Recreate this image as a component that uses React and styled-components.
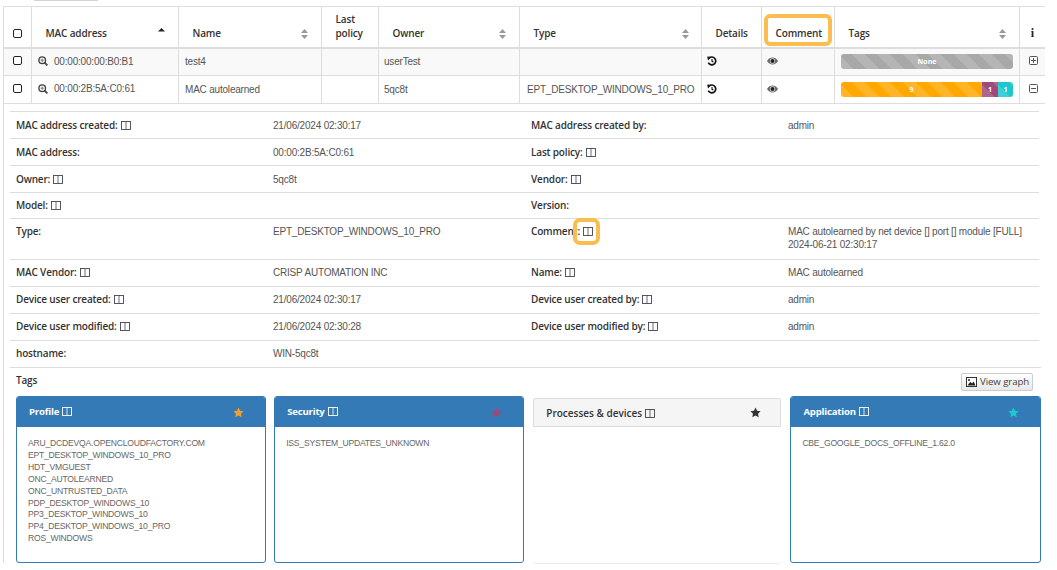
import React from "react";
import styled, { createGlobalStyle } from "styled-components";

const Global = createGlobalStyle`
  html, body { margin: 0; padding: 0; background: #fff; }
  body { font-family: "Liberation Sans", Arial, sans-serif; font-size: 10px; color: #555; overflow: hidden; height: 570px; }
`;

const Page = styled.div`
  width: 1042px;
  height: 570px;
  margin-left: 3px;
  overflow: hidden;
`;

const TopStub = styled.div`
  width: 64px;
  height: 1px;
  margin: 0 0 5px 31px;
  background: #d4d4d4;
`;

const Table = styled.table`
  width: 1042px;
  table-layout: fixed;
  border-collapse: collapse;
  border-left: 1px solid #ddd;
  border-right: 2px solid #ddd;
`;

const Head = styled.th`
  position: relative;
  height: 41px;
  padding: 0 0 7px 13.5px;
  box-sizing: border-box;
  border: 1px solid #ddd;
  border-bottom: 2px solid #ddd;
  vertical-align: bottom;
  text-align: left;
  font: 600 10px/14px "Open Sans", sans-serif;
  letter-spacing: -0.15px;
  color: #333;
  ${(p) => p.$tight && "padding-left: 9px;"}
  ${(p) => p.$center && "padding-left: 0; text-align: center;"}
`;

const Cell = styled.td`
  height: 28px;
  padding: 0 ${(p) => p.$pad ?? 6}px;
  box-sizing: border-box;
  border: 1px solid #ddd;
  background: ${(p) => (p.$alt ? "#f9f9f9" : "#fff")};
  white-space: nowrap;
  overflow: hidden;
  color: #555;
  font-size: 10px;
  letter-spacing: -0.2px;
  vertical-align: middle;
`;

const DetailHolder = styled.td`
  padding: 7px 5px 0 6px;
  border: 0;
  vertical-align: top;
`;

const Check = styled.span`
  display: block;
  width: 7px;
  height: 7px;
  margin-bottom: ${(p) => (p.$head ? "2px" : "3px")};
  border: 1.5px solid #222;
  border-radius: 2px;
  background: #fff;
`;

const SortIcon = styled.svg`
  position: absolute;
  right: ${(p) => p.$right}px;
  top: ${(p) => p.$top ?? 22}px;
  width: 7px;
  height: 10px;
`;

const MacCell = styled.span`
  display: inline-flex;
  align-items: center;
  gap: 6px;
`;

const Highlight = styled.span`
  position: absolute;
  box-sizing: border-box;
  border: 4px solid #fbbd4f;
  pointer-events: none;
`;

const HeadHighlight = styled(Highlight)`
  left: 2px;
  right: 2px;
  top: 7px;
  bottom: 1px;
  border-radius: 6px;
`;

const FieldHighlight = styled(Highlight)`
  left: 48px;
  top: -1px;
  width: 27px;
  height: 27px;
  border-radius: 7px;
`;

const Bar = styled.div`
  display: flex;
  height: 15px;
  border-radius: 3px;
  overflow: hidden;
`;

const Segment = styled.div`
  flex: ${(p) => p.$size} 0 0;
  display: flex;
  align-items: center;
  justify-content: center;
  font: 700 7px/1 "Open Sans", sans-serif;
  letter-spacing: 0;
  color: #fff;
  background-color: ${(p) => p.$color};
  background-image: repeating-linear-gradient(
    45deg,
    rgba(255, 255, 255, 0.15) 0 9px,
    transparent 9px 18px
  );
`;

const Details = styled.div`
  width: 1029px;
`;

const DetailRow = styled.div`
  display: grid;
  grid-template-columns: 257px 258px 257px 257px;
  border-top: 1px solid #ddd;
  min-height: ${(p) => p.$h}px;
`;

const DetailCell = styled.div`
  position: relative;
  padding: ${(p) => p.$top}px 6px 0;
  font-size: 10px;
  letter-spacing: -0.2px;
  line-height: 13px;
  color: #555;
`;

const Label = styled(DetailCell)`
  font: 600 10px/13px "Open Sans", sans-serif;
  letter-spacing: -0.17px;
  color: #333;
`;

const TagsBlock = styled.div`
  border-top: 1px solid #ddd;
  padding: 6px 0 0 6px;
  width: 1024.5px;
`;

const TagsTop = styled.div`
  display: flex;
  justify-content: space-between;
  align-items: flex-start;
  font: 600 10px/13px "Open Sans", sans-serif;
  letter-spacing: -0.17px;
  color: #333;
  padding-right: 7.5px;
  height: 22px;
`;

const GraphButton = styled.button`
  display: flex;
  align-items: center;
  gap: 3px;
  height: 18px;
  width: 72px;
  margin-top: -1px;
  padding: 0 3px 0 4px;
  white-space: nowrap;
  border: 1px solid #ccc;
  border-radius: 2px;
  background: linear-gradient(#fff, #e8e8e8);
  font: 400 9.7px/1 "Open Sans", sans-serif;
  letter-spacing: -0.1px;
  color: #444;
`;

const Cards = styled.div`
  display: grid;
  grid-template-columns: repeat(4, 1fr);
  gap: 8px;
`;

const Card = styled.div`
  box-sizing: border-box;
  height: ${(p) => (p.$muted ? "165px" : "167px")};
  margin: ${(p) => (p.$muted ? "2px 1px 0 1px" : "0")};
  border: ${(p) => (p.$muted ? "0" : "1px solid #337ab7")};
  border-radius: 3px;
  background: #fff;
  box-shadow: ${(p) => (p.$muted ? "0 1px 1px rgba(0,0,0,.08)" : "none")};
`;

const CardHead = styled.div`
  display: flex;
  align-items: center;
  justify-content: space-between;
  box-sizing: border-box;
  height: ${(p) => (p.$muted ? "29px" : "30px")};
  padding: 0 ${(p) => (p.$muted ? "19px" : "21px")} 0 12px;
  background: ${(p) => (p.$muted ? "#f5f5f5" : "#337ab7")};
  border: ${(p) => (p.$muted ? "1px solid #ddd" : "0")};
  border-radius: 2px 2px 0 0;
  font: ${(p) => (p.$muted ? "600 10px/1" : "700 9.6px/1")} "Open Sans", sans-serif;
  letter-spacing: ${(p) => (p.$muted ? "0" : "-0.2px")};
  color: ${(p) => (p.$muted ? "#333" : "#fff")};
`;

const TagList = styled.div`
  padding: 11px 11px 0;
  font-size: 8.6px;
  letter-spacing: -0.22px;
  line-height: 11.9px;
  color: #666;
`;

const Inline = styled.svg`
  display: inline-block;
  vertical-align: -1px;
  margin-left: 3px;
`;

const InfoMark = styled.span`
  display: block;
  font: 700 12px/14px "Liberation Serif", serif;
  color: #222;
`;

const PictureIcon = styled.svg`
  flex: none;
`;

const ColumnsIcon = ({ color = "#445" }) => (
  <Inline width="10" height="9" viewBox="0 0 10 9" fill="none" stroke={color} strokeWidth="0.9">
    <rect x="0.5" y="0.5" width="9" height="8" />
    <path d="M5 0.5V8.5" strokeWidth="0.8" />
  </Inline>
);

const Sort = ({ right = 13 }) => (
  <SortIcon $right={right} viewBox="0 0 7 10">
    <path d="M3.5 0L7 4H0Z M0 6H7L3.5 10Z" fill="#999" />
  </SortIcon>
);

const SortUp = () => (
  <SortIcon $right={13} $top={21} viewBox="0 0 7 10">
    <path d="M3.5 0L7 3.5H0Z" fill="#222" />
  </SortIcon>
);

const Zoom = () => (
  <svg width="10" height="10" viewBox="0 0 10 10">
    <circle cx="4.2" cy="4.2" r="3.3" fill="none" stroke="#444" strokeWidth="1.4" />
    <path d="M6.6 6.6L9.4 9.4" stroke="#444" strokeWidth="1.8" />
    <path d="M4.2 2.6V5.8M2.6 4.2H5.8" stroke="#666" strokeWidth="0.9" />
  </svg>
);

const History = () => (
  <svg width="10" height="10" viewBox="0 0 10 10" fill="none" stroke="#111">
    <path d="M2 2.2A3.9 3.9 0 1 1 1.3 6.6" strokeWidth="1.7" />
    <path d="M0.2 0.4L4.2 0.9L1 4.4Z" fill="#111" stroke="none" />
    <path d="M5 3V5.3L6.4 6" strokeWidth="1.1" />
  </svg>
);

const Eye = () => (
  <svg width="11" height="8" viewBox="0 0 11 8">
    <path d="M0 4C2.8 -0.6 8.2 -0.6 11 4C8.2 8.6 2.8 8.6 0 4Z" fill="#666" />
    <circle cx="5.5" cy="4" r="2.7" fill="#ddd" />
    <circle cx="5.5" cy="4" r="2" fill="#222" />
  </svg>
);

const BoxIcon = ({ plus }) => (
  <svg width="9" height="9" viewBox="0 0 9 9" fill="none" stroke="#555">
    <rect x="0.5" y="0.5" width="8" height="8" rx="1" />
    <path d={plus ? "M2 4.5H7M4.5 2V7" : "M2 4.5H7"} />
  </svg>
);

const Star = ({ color }) => (
  <svg width="11" height="11" viewBox="0 0 24 24">
    <path
      fill={color}
      d="M12 1l3.4 7.2 7.8 1-5.7 5.4 1.5 7.8L12 18.6l-7 3.8 1.5-7.8L.8 9.2l7.8-1z"
    />
  </svg>
);

const Picture = () => (
  <PictureIcon width="11" height="10" viewBox="0 0 11 10">
    <rect x="0.5" y="0.5" width="10" height="9" fill="#fff" stroke="#333" />
    <path d="M1.5 8.5L4.3 4.8L6 6.5L7.7 4.5L9.5 8.5Z" fill="#222" />
    <circle cx="3" cy="3" r="1" fill="#222" />
  </PictureIcon>
);

const rows = [
  [
    { k: "MAC address created:", icon: true, v: "21/06/2024 02:30:17" },
    { k: "MAC address created by:", v: "admin" },
    26, 7,
  ],
  [
    { k: "MAC address:", v: "00:00:2B:5A:C0:61" },
    { k: "Last policy:", icon: true, v: "" },
    26, 7,
  ],
  [
    { k: "Owner:", icon: true, v: "5qc8t" },
    { k: "Vendor:", icon: true, v: "" },
    26, 7,
  ],
  [
    { k: "Model:", icon: true, v: "" },
    { k: "Version:", v: "" },
    25, 6,
  ],
  [
    { k: "Type:", v: "EPT_DESKTOP_WINDOWS_10_PRO" },
    {
      k: "Comment:",
      icon: true,
      mark: true,
      v: (
        <>
          MAC autolearned by net device [] port [] module [FULL]
          <br />
          2024-06-21 02:30:17
        </>
      ),
    },
    40, 6,
  ],
  [
    { k: "MAC Vendor:", icon: true, v: "CRISP AUTOMATION INC" },
    { k: "Name:", icon: true, v: "MAC autolearned" },
    26, 6,
  ],
  [
    { k: "Device user created:", icon: true, v: "21/06/2024 02:30:17" },
    { k: "Device user created by:", icon: true, v: "admin" },
    26, 6,
  ],
  [
    { k: "Device user modified:", icon: true, v: "21/06/2024 02:30:28" },
    { k: "Device user modified by:", icon: true, v: "admin" },
    26, 6,
  ],
  [{ k: "hostname:", v: "WIN-5qc8t" }, { k: "", v: "" }, 26, 6],
];

const cards = [
  {
    title: "Profile",
    star: "#f0a030",
    tags: [
      "ARU_DCDEVQA.OPENCLOUDFACTORY.COM",
      "EPT_DESKTOP_WINDOWS_10_PRO",
      "HDT_VMGUEST",
      "ONC_AUTOLEARNED",
      "ONC_UNTRUSTED_DATA",
      "PDP_DESKTOP_WINDOWS_10",
      "PP3_DESKTOP_WINDOWS_10",
      "PP4_DESKTOP_WINDOWS_10_PRO",
      "ROS_WINDOWS",
    ],
  },
  { title: "Security", star: "#a04a7a", tags: ["ISS_SYSTEM_UPDATES_UNKNOWN"] },
  { title: "Processes & devices", star: "#333", muted: true, tags: [] },
  { title: "Application", star: "#1cc8d0", tags: ["CBE_GOOGLE_DOCS_OFFLINE_1.62.0"] },
];

const Field = ({ k, icon, mark, top }) => (
  <Label $top={top}>
    {k}
    {icon && <ColumnsIcon />}
    {mark && <FieldHighlight />}
  </Label>
);

export default function App() {
  return (
    <Page>
      <Global />
      <TopStub />
      <Table>
        <colgroup>
          {[28, 147, 143, 57, 141, 182, 60, 73, 185, 26].map((w, i) => (
            <col key={i} width={w} />
          ))}
        </colgroup>
        <thead>
          <tr>
            <Head $tight><Check $head /></Head>
            <Head>MAC address<SortUp /></Head>
            <Head>Name<Sort /></Head>
            <Head>Last<br />policy</Head>
            <Head>Owner<Sort /></Head>
            <Head>Type<Sort right={12} /></Head>
            <Head>Details</Head>
            <Head>Comment<HeadHighlight /></Head>
            <Head>Tags<Sort /></Head>
            <Head $center><InfoMark>i</InfoMark></Head>
          </tr>
        </thead>
        <tbody>
          <tr>
            <Cell $alt $pad={9}><Check /></Cell>
            <Cell $alt><MacCell><Zoom />00:00:00:00:B0:B1</MacCell></Cell>
            <Cell $alt>test4</Cell>
            <Cell $alt />
            <Cell $alt $pad={5}>userTest</Cell>
            <Cell $alt />
            <Cell $alt $pad={5}><History /></Cell>
            <Cell $alt $pad={5}><Eye /></Cell>
            <Cell $alt>
              <Bar><Segment $size={1} $color="#a8a8a8">None</Segment></Bar>
            </Cell>
            <Cell $alt $pad={9}><BoxIcon plus /></Cell>
          </tr>
          <tr>
            <Cell $pad={9}><Check /></Cell>
            <Cell><MacCell><Zoom />00:00:2B:5A:C0:61</MacCell></Cell>
            <Cell>MAC autolearned</Cell>
            <Cell />
            <Cell $pad={5}>5qc8t</Cell>
            <Cell $pad={7}>EPT_DESKTOP_WINDOWS_10_PRO</Cell>
            <Cell $pad={5}><History /></Cell>
            <Cell $pad={5}><Eye /></Cell>
            <Cell>
              <Bar>
                <Segment $size={141} $color="#ffa800">9</Segment>
                <Segment $size={16} $color="#a04a7a">1</Segment>
                <Segment $size={15} $color="#1cc8d0">1</Segment>
              </Bar>
            </Cell>
            <Cell $pad={9}><BoxIcon /></Cell>
          </tr>
          <tr>
            <DetailHolder colSpan={10}>
              <Details>
                {rows.map(([a, b, h, top], i) => (
                  <DetailRow key={i} $h={h}>
                    <Field {...a} top={top} />
                    <DetailCell $top={top}>{a.v}</DetailCell>
                    <Field {...b} top={top} />
                    <DetailCell $top={top}>{b.v}</DetailCell>
                  </DetailRow>
                ))}
                <TagsBlock>
                  <TagsTop>
                    Tags
                    <GraphButton><Picture />View graph</GraphButton>
                  </TagsTop>
                  <Cards>
                    {cards.map((c) => (
                      <Card key={c.title} $muted={c.muted}>
                        <CardHead $muted={c.muted}>
                          <span>{c.title}<ColumnsIcon color={c.muted ? "#444" : "#fff"} /></span>
                          <Star color={c.star} />
                        </CardHead>
                        <TagList>
                          {c.tags.map((t) => <div key={t}>{t}</div>)}
                        </TagList>
                      </Card>
                    ))}
                  </Cards>
                </TagsBlock>
              </Details>
            </DetailHolder>
          </tr>
        </tbody>
      </Table>
    </Page>
  );
}
